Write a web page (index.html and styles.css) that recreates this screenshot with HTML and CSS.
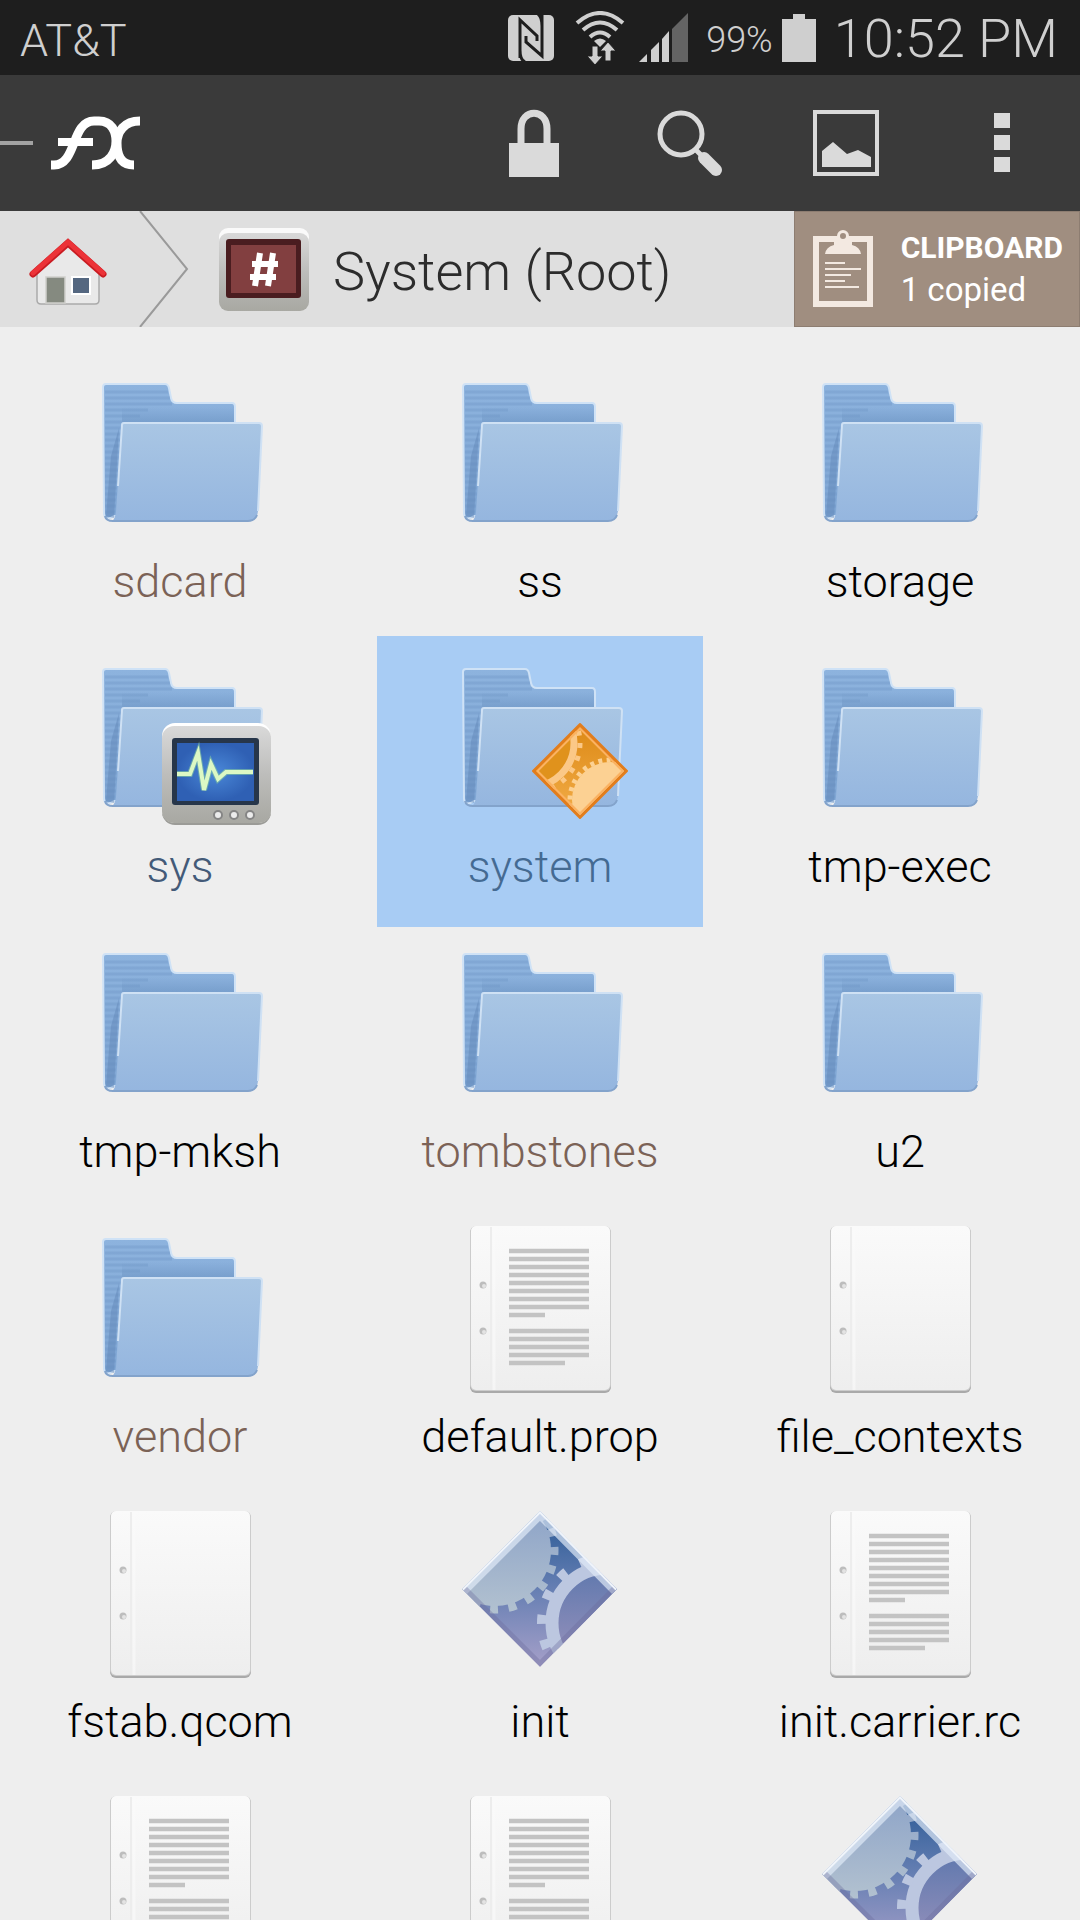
FILE: index.html
```
<!DOCTYPE html>
<html lang="en">
<head>
    <meta charset="UTF-8">
    <meta name="viewport" content="width=device-width, initial-scale=1.0">
    <title>System (Root)</title>
    <link rel="stylesheet" href="styles.css">
</head>
<body>
    <!-- shared icons -->
    <svg class="defs" width="0" height="0" aria-hidden="true">
        <defs>
            <linearGradient id="folderBack" x1="0" y1="0" x2="0" y2="1">
                <stop offset="0" stop-color="#8db3de"/>
                <stop offset="1" stop-color="#7fa6d4"/>
            </linearGradient>
            <linearGradient id="folderFront" x1="0" y1="0" x2="0" y2="1">
                <stop offset="0" stop-color="#a9c6e4"/>
                <stop offset="1" stop-color="#95b6df"/>
            </linearGradient>
            <linearGradient id="folderShade" x1="0" y1="0" x2="0" y2="1">
                <stop offset="0" stop-color="#6e95c4" stop-opacity="0"/>
                <stop offset="1" stop-color="#6e95c4" stop-opacity="0.6"/>
            </linearGradient>
            <linearGradient id="paper" x1="0" y1="0" x2="0" y2="1">
                <stop offset="0" stop-color="#fafafa"/>
                <stop offset="1" stop-color="#eeeeee"/>
            </linearGradient>
            <linearGradient id="metal" x1="0" y1="0" x2="0" y2="1">
                <stop offset="0" stop-color="#d9d9d9"/>
                <stop offset="0.5" stop-color="#bdbdbb"/>
                <stop offset="1" stop-color="#a8a8a2"/>
            </linearGradient>
            <linearGradient id="gearBg" x1="0" y1="0" x2="0" y2="1">
                <stop offset="0.1" stop-color="#34609a"/>
                <stop offset="0.5" stop-color="#667fb3"/>
                <stop offset="1" stop-color="#a6a0c9"/>
            </linearGradient>
            <linearGradient id="gearLight" gradientUnits="userSpaceOnUse" x1="0" y1="10" x2="0" y2="110">
                <stop offset="0" stop-color="#8fa5c8"/>
                <stop offset="1" stop-color="#b3c2d0"/>
            </linearGradient>
            <linearGradient id="gearHole" gradientUnits="userSpaceOnUse" x1="0" y1="65" x2="0" y2="150">
                <stop offset="0" stop-color="#6179ae"/>
                <stop offset="1" stop-color="#9490bb"/>
            </linearGradient>
            <linearGradient id="orangeBg" x1="0" y1="0" x2="0" y2="1">
                <stop offset="0" stop-color="#dd8a16"/>
                <stop offset="1" stop-color="#f2ac48"/>
            </linearGradient>
            <radialGradient id="scope">
                <stop offset="0" stop-color="#4a88d8"/>
                <stop offset="1" stop-color="#2f60b4"/>
            </radialGradient>
            <clipPath id="gearClip"><path d="M92 5 169 83 92 161 14 83Z"/></clipPath>
            <clipPath id="orangeClip"><path d="M132 76 176 120 132 164 88 120Z"/></clipPath>

            <symbol id="folder" viewBox="0 0 184 176">
                <path d="M18 18H77Q80 18 81 22L83 32Q84 37 89 37H144Q147 37 147 41V150H26Q17 156 16 148L15 21Q15 18 18 18Z" fill="url(#folderBack)" stroke="#cfe2f6" stroke-width="2"/>
                <path d="M17 26H80M17 32H82M17 38H84M17 44H60M17 50H52M17 56H34M17 62H34M17 68H33M17 74H33M17 80H33M17 86H32M17 92H32M17 98H31M17 104H31M17 110H30M17 116H30M17 122H29M17 128H29M17 134H28M17 140H28M17 146H27" stroke="#7198c8" stroke-width="3" opacity="0.4"/>
                <path d="M34 41H146V56H34Z" fill="url(#folderShade)"/>
                <path d="M31 62 26 152 18 150 23 90Z" fill="#5f86b6" opacity="0.45"/>
                <path d="M36 57H171Q174 57 174 60L170 145Q169 155 160 155H24Q27 153 28 146L34 59Q34 57 36 57Z" fill="url(#folderFront)"/>
                <path d="M30 120 34 59Q34 57 36 57H171Q174 57 174 60L170 145" fill="none" stroke="#cfe1f4" stroke-width="2"/>
                <path d="M17 150Q18 155 25 155H160Q167 155 169 149" fill="none" stroke="#83a3cb" stroke-width="2"/>
            </symbol>

            <symbol id="blank" viewBox="0 0 184 176">
                <rect x="22" y="6" width="141" height="166" rx="6" fill="#a9a9a9"/>
                <rect x="22" y="5" width="141" height="165" rx="6" fill="#cccccc"/>
                <rect x="23" y="5" width="139" height="164" rx="5" fill="url(#paper)"/>
                <path d="M43 6V169" stroke="#ededed" stroke-width="2"/>
                <path d="M46 6V169" stroke="#fbfbfb" stroke-width="3" opacity="0.6"/>
                <circle cx="35" cy="64" r="3.5" fill="#bdbdbd"/>
                <circle cx="36" cy="65" r="2" fill="#e3e3e3"/>
                <circle cx="35" cy="110" r="3.5" fill="#bdbdbd"/>
                <circle cx="36" cy="111" r="2" fill="#e3e3e3"/>
            </symbol>

            <symbol id="text" viewBox="0 0 184 176">
                <use href="#blank" width="184" height="176"/>
                <path d="M61 30H141M61 38H141M61 46H141M61 54H141M61 62H141M61 70H141M61 78H141M61 86H141M61 94H97M61 110H141M61 118H141M61 126H141M61 134H141M61 142H117" stroke="#c3c3c3" stroke-width="4.4"/>
            </symbol>

            <symbol id="exec" viewBox="0 0 184 176">
                <g clip-path="url(#gearClip)">
                    <path d="M92 5 169 83 92 161 14 83Z" fill="url(#gearBg)"/>
                    <circle cx="47" cy="44" r="56" fill="url(#gearLight)"/>
                    <circle cx="47" cy="44" r="59" fill="none" stroke="url(#gearLight)" stroke-width="9" stroke-dasharray="8 10.500" stroke-dashoffset="3"/>
                    <circle cx="159" cy="117" r="55" fill="url(#gearHole)" stroke="#bcc7e0" stroke-width="13"/>
                    <circle cx="159" cy="117" r="65" fill="none" stroke="#bcc7e0" stroke-width="10" stroke-dasharray="9 16" stroke-dashoffset="-3"/>
                    <path d="M14 83 92 5 169 83" fill="none" stroke="#dfeaf6" stroke-width="14" opacity="0.7"/>
                    <path d="M14 83 92 161 169 83" fill="none" stroke="#6b6b9c" stroke-width="10" opacity="0.35"/>
                    <path d="M14 83 92 5 169 83" fill="none" stroke="#f0f4fa" stroke-width="4"/>
                </g>
            </symbol>

            <symbol id="monitor" viewBox="0 0 184 176">
                <rect x="74" y="73" width="109" height="101" rx="13" fill="#9b9b97"/>
                <rect x="74" y="72" width="109" height="100" rx="13" fill="#ffffff"/>
                <rect x="74" y="75" width="109" height="97" rx="12" fill="url(#metal)"/>
                <rect x="84" y="87" width="87" height="67" rx="3" fill="#27364a"/>
                <rect x="89" y="92" width="77" height="58" fill="url(#scope)"/>
                <path d="M89 123H102L110 102 116 139 123 113 130 128 138 121H165" fill="none" stroke="#86c9a0" stroke-width="6" opacity="0.6"/>
                <path d="M89 123H102L110 102 116 139 123 113 130 128 138 121H165" fill="none" stroke="#dcf8c4" stroke-width="4"/>
                <g fill="#ececec" stroke="#858585" stroke-width="2">
                    <circle cx="130" cy="164" r="4"/>
                    <circle cx="146" cy="164" r="4"/>
                    <circle cx="162" cy="164" r="4"/>
                </g>
            </symbol>

            <symbol id="gears" viewBox="0 0 184 176">
                <path d="M132 73 179 120 132 167 85 120Z" fill="#e27d1c" stroke="#e27d1c" stroke-width="2" stroke-linejoin="round"/>
                <g clip-path="url(#orangeClip)">
                    <path d="M132 76 176 120 132 164 88 120Z" fill="url(#orangeBg)"/>
                    <circle cx="82" cy="92" r="44" fill="#e0921c" stroke="#fbc887" stroke-width="7"/>
                    <circle cx="82" cy="92" r="50" fill="none" stroke="#fbc887" stroke-width="5" stroke-dasharray="5 8.1"/>
                    <circle cx="162" cy="149" r="38" fill="#fcd193"/>
                    <circle cx="162" cy="149" r="40" fill="none" stroke="#fcd193" stroke-width="5" stroke-dasharray="4 4.4"/>
                    <path d="M132 76 176 120 132 164 88 120Z" fill="none" stroke="#fbb262" stroke-width="4"/>
                </g>
            </symbol>
        </defs>
    </svg>

    <div class="statusbar">
        <span class="carrier">AT&amp;T</span>
        <div class="status-icons">
            <svg width="48" height="48" viewBox="0 0 48 48" aria-label="NFC">
                <rect x="1" y="1" width="46" height="46" rx="5" fill="#cfcfcf"/>
                <path d="M13 44V6L30 22V27M35 1V42L19 28V22M13 36Q13 46 18 48M35 12Q35 3 31 0" fill="none" stroke="#1e1e1e" stroke-width="3"/>
            </svg>
            <svg class="wifi" width="50" height="54" viewBox="0 0 50 54" aria-label="Wi-Fi">
                <g fill="none" stroke="#cfcfcf" stroke-width="4">
                    <path d="M2 12Q25 -8 48 12"/>
                    <path d="M8 19Q25 4 42 19"/>
                    <path d="M15 26Q25 17 35 26"/>
                </g>
                <path d="M19 30Q25 25 31 30L25 36Z" fill="#cfcfcf"/>
                <path d="M17 35H23V45H28L20 54 12 45H17ZM30 50V40H25L33 31 41 40H36V50Z" fill="#cfcfcf" stroke="#1e1e1e" stroke-width="1"/>
            </svg>
            <svg class="signal" width="49" height="49" viewBox="0 0 49 49" aria-label="Signal">
                <path d="M0 49 8 41V49ZM12 37 20 29V49H12ZM23 26 30 18V49H23Z" fill="#cfcfcf"/>
                <path d="M33 16 49 0V49H33Z" fill="#646464"/>
            </svg>
            <span class="percent">99%</span>
            <svg width="34" height="48" viewBox="0 0 34 48" aria-label="Battery">
                <path d="M11 0H23V5H34V48H0V5H11Z" fill="#cfcfcf"/>
            </svg>
            <span class="clock">10:52 PM</span>
        </div>
    </div>

    <header class="toolbar">
        <button class="drawer" aria-label="Open menu">
            <span class="drawer-line"></span>
            <svg width="90" height="54" viewBox="0 0 90 54">
                <g fill="none" stroke="#ffffff" stroke-width="9">
                    <path d="M0 49H3C26 49 20 5 43 5H48C61 5 65 16 65 25C65 36 59 49 41 49"/>
                    <path d="M89 5C73 5 66 16 66 27C66 38 69 49 83 49"/>
                    <path d="M7 26H42" stroke-width="8"/>
                </g>
            </svg>
        </button>
        <button class="tool" aria-label="Lock">
            <svg width="50" height="68" viewBox="0 0 50 68">
                <path d="M12 36V20C12 -1 38 -1 38 20V36" fill="none" stroke="#dadada" stroke-width="7"/>
                <path d="M0 34H50V68H0Z" fill="#dadada"/>
            </svg>
        </button>
        <button class="tool" aria-label="Search">
            <svg width="66" height="66" viewBox="0 0 66 66">
                <circle cx="24" cy="24" r="21" fill="none" stroke="#dadada" stroke-width="5"/>
                <path d="M38 39 48 49" stroke="#dadada" stroke-width="5"/>
                <path d="M47 48 59 60" stroke="#dadada" stroke-width="12" stroke-linecap="round"/>
            </svg>
        </button>
        <button class="tool" aria-label="View">
            <svg width="66" height="66" viewBox="0 0 66 66">
                <path d="M2 2H64V64H2Z" fill="none" stroke="#dadada" stroke-width="4"/>
                <path d="M9 57V41L20 32 34 44 45 40 58 47V57Z" fill="#dadada"/>
            </svg>
        </button>
        <button class="tool" aria-label="More options">
            <svg width="16" height="60" viewBox="0 0 16 60">
                <path d="M0 0H16V15H0ZM0 22H16V37H0ZM0 44H16V59H0Z" fill="#dadada"/>
            </svg>
        </button>
    </header>

    <nav class="breadcrumb">
        <a class="home" href="#" aria-label="Home">
            <svg width="78" height="68" viewBox="0 0 78 68">
                <path d="M8 30 39 5 70 30V63Q70 67 66 67H12Q8 67 8 63Z" fill="#e9e9e9" stroke="#aaaaaa" stroke-width="1.5"/>
                <path d="M17 40H36V66H17Z" fill="#858a80" stroke="#cfcfcb" stroke-width="1.5"/>
                <path d="M43 40H61V57H43Z" fill="#546780" stroke="#ffffff" stroke-width="2"/>
                <path d="M4 37 39 6 74 37" fill="none" stroke="#c91c22" stroke-width="7" stroke-linecap="round"/>
                <path d="M4 36 39 5 74 36" fill="none" stroke="#ec3338" stroke-width="5" stroke-linecap="round"/>
            </svg>
        </a>
        <svg class="chevron" width="50" height="116" viewBox="0 0 50 116">
            <path d="M1 0 48 58 1 116" fill="none" stroke="#9a9a9a" stroke-width="2"/>
        </svg>
        <a class="crumb" href="#">
            <svg width="90" height="83" viewBox="0 0 90 83">
                <rect width="90" height="80" rx="9" fill="#fafafa"/>
                <rect y="5" width="90" height="78" rx="9" fill="url(#metal)"/>
                <rect x="7" y="11" width="75" height="59" rx="3" fill="#4a1d20"/>
                <rect x="12" y="17" width="65" height="48" fill="#823f40"/>
                <path d="M41 25 36 58M54 25 49 58M33 36H59M31 49H57" fill="none" stroke="#ffffff" stroke-width="6"/>
            </svg>
            <span>System (Root)</span>
        </a>
        <button class="clipboard">
            <svg width="60" height="78" viewBox="0 0 60 78">
                <path d="M3 9H57V74H3Z" fill="none" stroke="#f3e9e1" stroke-width="6"/>
                <path d="M12 24Q13 17 21 15V9H39V15Q47 17 48 24Z" fill="#f3e9e1"/>
                <circle cx="30" cy="6" r="4.5" fill="#a08e80" stroke="#f3e9e1" stroke-width="3"/>
                <path d="M12 33H32M12 39H48M12 45H38M12 51H32M12 57H46" stroke="#f3e9e1" stroke-width="2"/>
            </svg>
            <span class="clipboard-text">
                <b>CLIPBOARD</b>
                <span>1 copied</span>
            </span>
        </button>
    </nav>

    <main class="files">
        <a class="item link" href="#"><svg class="icon"><use href="#folder"/></svg><span>sdcard</span></a>
        <a class="item" href="#"><svg class="icon"><use href="#folder"/></svg><span>ss</span></a>
        <a class="item" href="#"><svg class="icon"><use href="#folder"/></svg><span>storage</span></a>

        <a class="item special" href="#"><svg class="icon"><use href="#folder"/><use href="#monitor"/></svg><span>sys</span></a>
        <a class="item selected" href="#"><svg class="icon"><use href="#folder"/><use href="#gears"/></svg><span>system</span></a>
        <a class="item" href="#"><svg class="icon"><use href="#folder"/></svg><span>tmp-exec</span></a>

        <a class="item" href="#"><svg class="icon"><use href="#folder"/></svg><span>tmp-mksh</span></a>
        <a class="item link" href="#"><svg class="icon"><use href="#folder"/></svg><span>tombstones</span></a>
        <a class="item" href="#"><svg class="icon"><use href="#folder"/></svg><span>u2</span></a>

        <a class="item link" href="#"><svg class="icon"><use href="#folder"/></svg><span>vendor</span></a>
        <a class="item" href="#"><svg class="icon"><use href="#text"/></svg><span>default.prop</span></a>
        <a class="item" href="#"><svg class="icon"><use href="#blank"/></svg><span>file_contexts</span></a>

        <a class="item" href="#"><svg class="icon"><use href="#blank"/></svg><span>fstab.qcom</span></a>
        <a class="item" href="#"><svg class="icon"><use href="#exec"/></svg><span>init</span></a>
        <a class="item" href="#"><svg class="icon"><use href="#text"/></svg><span>init.carrier.rc</span></a>

        <a class="item" href="#" aria-label="File"><svg class="icon"><use href="#text"/></svg></a>
        <a class="item" href="#" aria-label="File"><svg class="icon"><use href="#text"/></svg></a>
        <a class="item" href="#" aria-label="Program"><svg class="icon"><use href="#exec"/></svg></a>
    </main>
</body>
</html>
```

FILE: styles.css
```
* {
    box-sizing: border-box;
}

body {
    margin: 0;
    height: 100vh;
    display: flex;
    flex-direction: column;
    overflow: hidden;
    background: #eeeeee;
    color: #000000;
    font-family: Roboto, sans-serif;
    font-weight: 300;
}

a {
    color: inherit;
    text-decoration: none;
}

button {
    padding: 0;
    border: none;
    background: none;
    font: inherit;
    color: inherit;
    cursor: pointer;
}

svg {
    display: block;
    flex: none;
}

.defs {
    position: absolute;
}

/* status bar */
.statusbar {
    display: flex;
    flex: none;
    align-items: center;
    justify-content: space-between;
    height: 75px;
    padding: 0 22px 0 20px;
    background: #1e1e1e;
    color: #cfcfcf;
    white-space: nowrap;
}

.carrier {
    padding-top: 6px;
    font-size: 45px;
}

.status-icons {
    display: flex;
    align-items: center;
}

.wifi {
    margin-left: 20px;
}

.signal {
    margin-left: 14px;
}

.percent {
    margin: 4px 9px 0 18px;
    font-size: 36px;
    font-weight: 300;
}

.clock {
    margin-left: 18px;
    padding-top: 2px;
    font-size: 54px;
}

/* toolbar */
.toolbar {
    display: flex;
    flex: none;
    height: 136px;
    background: #3a3a3a;
}

.drawer {
    display: flex;
    align-items: center;
    gap: 18px;
    margin-right: auto;
}

.drawer-line {
    width: 33px;
    height: 4px;
    background: #a2a2a2;
}

.tool {
    display: flex;
    align-items: center;
    justify-content: center;
    width: 156px;
}

/* breadcrumb */
.breadcrumb {
    display: flex;
    flex: none;
    height: 116px;
    background: #dfdfdf;
    color: #2c2c2c;
}

.home {
    display: flex;
    align-items: center;
    padding: 4px 32px 0 29px;
}

.crumb {
    display: flex;
    align-items: center;
    gap: 24px;
    margin-left: 30px;
    font-size: 54px;
    white-space: nowrap;
}

.crumb span {
    padding-top: 4px;
}

.clipboard {
    display: flex;
    align-items: center;
    gap: 28px;
    margin-left: auto;
    padding: 0 16px 0 18px;
    border: 1px solid #8d7d71;
    background: #a08e80;
    color: #ffffff;
    font-weight: 400;
    text-align: left;
    white-space: nowrap;
}

.clipboard-text {
    display: flex;
    flex-direction: column;
    font-size: 33px;
    line-height: 42px;
}

.clipboard-text b {
    font-size: 30px;
    font-weight: 700;
}

/* file grid */
.files {
    flex: 1;
    display: grid;
    grid-template-columns: repeat(3, 1fr);
    align-content: start;
    min-height: 0;
    padding-top: 24px;
    overflow: hidden;
}

/* neighbouring cells share a little of their height */
.item {
    display: flex;
    flex-direction: column;
    align-items: center;
    gap: 12px;
    margin: 0 17px -6px;
    padding: 15px 0 32px;
    font-size: 45px;
    line-height: 56px;
}

.icon {
    width: 184px;
    height: 176px;
}

.link {
    color: #7b6256;
}

.special {
    color: #435a78;
}

.selected {
    background: #a8ccf4;
    color: #446a92;
}
```
